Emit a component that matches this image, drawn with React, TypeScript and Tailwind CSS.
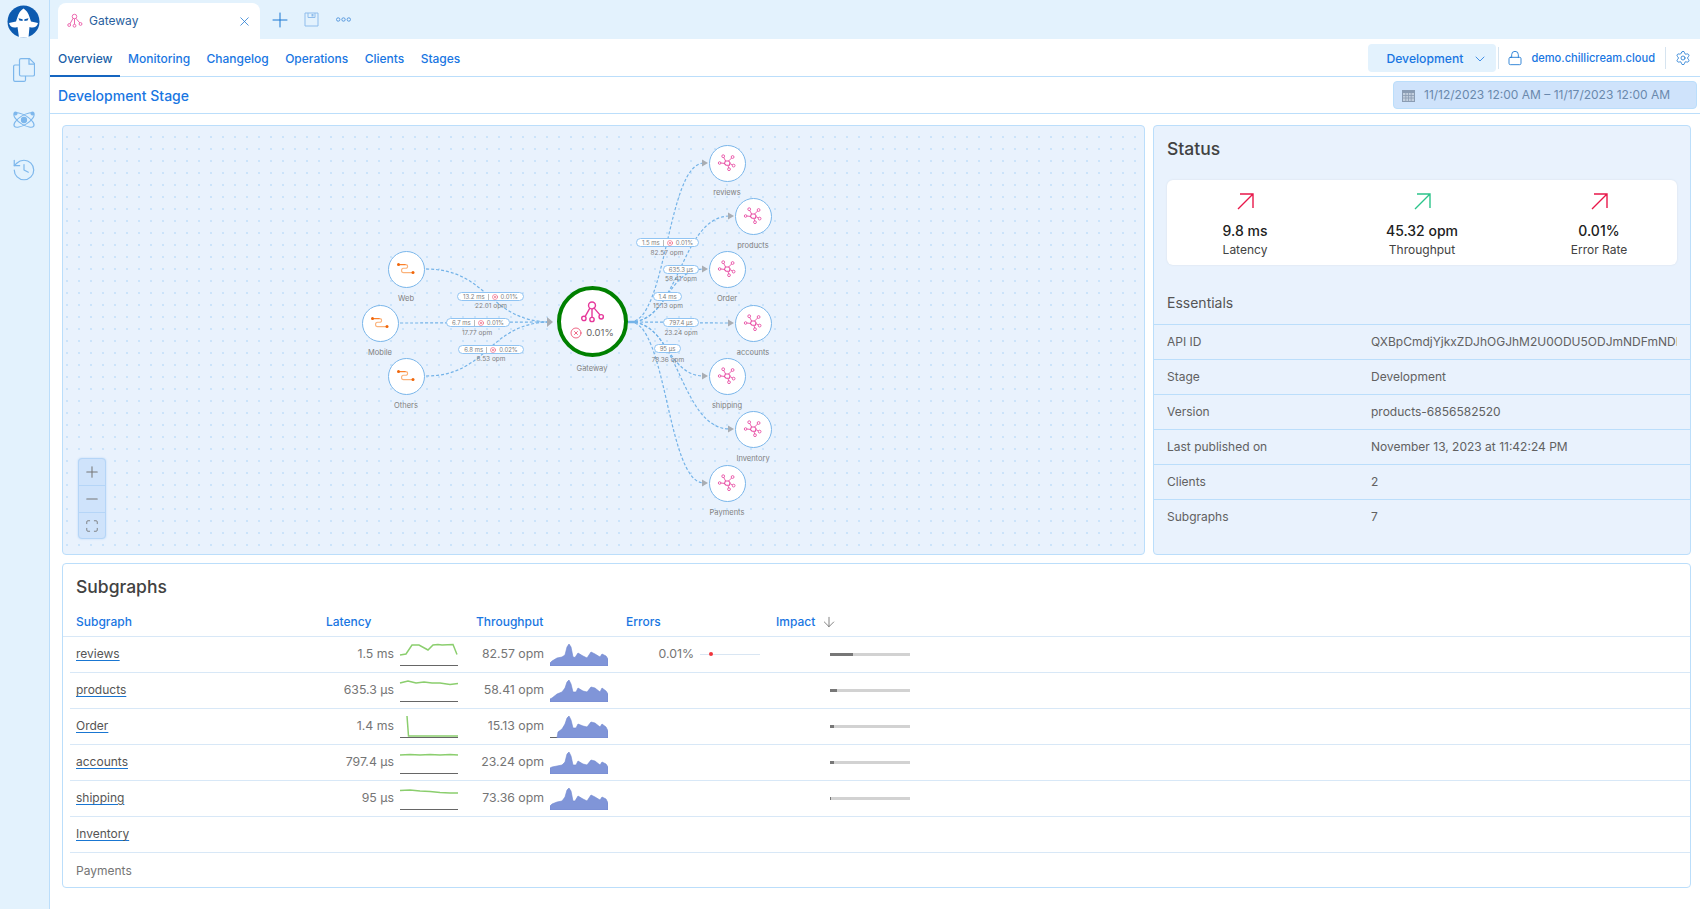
import React from "react";
import { Plus, X, ChevronDown, Lock, Settings, ArrowDown, Minus, History, Maximize, CircleX } from "lucide-react";

const OX = 63;
const OY = 126;

function GatewayIcon({ size, className }: { size: number; className?: string }) {
  return (
    <svg width={size} height={size} viewBox="0 0 24 24" fill="none" stroke="currentColor" strokeWidth="1.3" className={className}>
      <circle cx="12" cy="5" r="3.2" />
      <path d="M12 8.2v7.6M10 7.5 5.5 15.5M14 7.5l5.5 6.5" />
      <circle cx="4.5" cy="17" r="2" />
      <circle cx="12" cy="18" r="2" />
      <circle cx="20.5" cy="15.5" r="2" />
    </svg>
  );
}

function SubgraphIcon() {
  return (
    <svg width="20" height="20" viewBox="0 0 20 20" fill="none" stroke="#e84fa5" strokeWidth="0.9">
      <path d="M8.4 8h3.2l1.4 1.6-.6 2.6H9l-1.6-1.6z" strokeWidth="1.1" />
      <path d="M8.6 8 6.6 4.2M11.6 8l3-3M13 10.6l2.6 1.4M11 12.4l.6 2.6M7.4 10.4 3.8 10" />
      <circle cx="6.2" cy="3.2" r="1.4" />
      <circle cx="15.6" cy="4" r="1.4" />
      <circle cx="16.6" cy="12.6" r="1.4" />
      <circle cx="12" cy="16.2" r="1.4" />
      <circle cx="2.6" cy="10" r="1.3" />
    </svg>
  );
}

function ClientIcon() {
  return (
    <svg width="20" height="14" viewBox="0 0 20 14">
      <path d="M2.5 2.6h7c2.8 0 2.8 3.6 0 3.6H7.5c-2.6 0-2.6 4.4 0 4.4h9" fill="none" stroke="#fbb27a" strokeWidth="1.1" />
      <path d="M2.5 2.6h7" fill="none" stroke="#f97316" strokeWidth="0.9" />
      <circle cx="2.5" cy="2.6" r="1.5" fill="#f0660a" />
      <circle cx="17" cy="10.6" r="1.5" fill="#f0660a" />
    </svg>
  );
}

function Logo() {
  return (
    <svg width="33" height="33" viewBox="0 0 33 33">
      <circle cx="16.5" cy="16.5" r="16" fill="#0d5bb0" />
      <path d="M16.5 3.5 C19 5 21.5 8 22.5 12 L24 16.5 L31 18 C30 22 26.5 23.5 22.5 22 L21.5 32.5 H12 L10.5 22 C6.5 23.5 3 22 2 18 L9 16.5 L10.5 12 C11.5 8 14 5 16.5 3.5Z" fill="#fff" />
      <path d="M11.5 13.2 L15.6 14.2 V16 L12.4 15.6Z M21.5 13.2 L17.4 14.2 V16 L20.6 15.6Z" fill="#0d5bb0" />
    </svg>
  );
}

function CopyIcon() {
  return (
    <svg width="22" height="24" viewBox="0 0 22 24" fill="none" stroke="#7db7ec" strokeWidth="1.2">
      <path d="M6.5 7H2A1.5 1.5 0 0 0 .6 8.5V22A1.5 1.5 0 0 0 2 23.4h9a1.5 1.5 0 0 0 1.5-1.4v-4" />
      <path d="M8 .6h8.5l5 5V16.5A1.5 1.5 0 0 1 20 18H8a1.5 1.5 0 0 1-1.5-1.5V2A1.5 1.5 0 0 1 8 .6z" />
      <path d="M16 .6v5.5h5.5" />
    </svg>
  );
}

function AtomIcon() {
  return (
    <svg width="24" height="24" viewBox="0 0 24 24" fill="none" stroke="#7db7ec" strokeWidth="1.1">
      <ellipse cx="12" cy="12" rx="11.5" ry="4.6" transform="rotate(-32 12 12)" />
      <ellipse cx="12" cy="12" rx="11.5" ry="4.6" transform="rotate(32 12 12)" />
      <circle cx="12" cy="12" r="2.6" fill="#7db7ec" />
      <circle cx="3.5" cy="5.5" r="1.5" fill="#7db7ec" />
      <circle cx="20.5" cy="5.5" r="1.5" fill="#7db7ec" />
    </svg>
  );
}

function SaveIcon() {
  return (
    <svg width="15" height="15" viewBox="0 0 15 15" fill="none" stroke="#8fbdec" strokeWidth="1">
      <path d="M1 1h13v13H1z" />
      <path d="M4 1v4.5h7V1" />
      <rect x="7.5" y="2" width="2" height="2.5" fill="#8fbdec" stroke="none" />
    </svg>
  );
}

function TreeDots() {
  return (
    <svg width="15" height="7" viewBox="0 0 15 7" fill="none" stroke="#5a9bdf" strokeWidth="1">
      <circle cx="2.2" cy="3.5" r="1.7" />
      <circle cx="7.5" cy="3.5" r="1.7" />
      <circle cx="12.8" cy="3.5" r="1.7" />
    </svg>
  );
}

function CalendarIcon() {
  return (
    <svg width="13" height="13" viewBox="0 0 13 13">
      <rect x="0" y="1" width="13" height="12" fill="#8a9cb3" />
      <rect x="1" y="4" width="11" height="8" fill="#c3cfdd" />
      <path d="M1 6.5h11M1 9h11M3.8 4v8M6.5 4v8M9.2 4v8" stroke="#8a9cb3" strokeWidth="0.8" />
    </svg>
  );
}

function UpRight({ color }: { color: string }) {
  return (
    <svg width="17" height="17" viewBox="0 0 17 17" fill="none" stroke={color} strokeWidth="1.4">
      <path d="M1 16 16 1M3 1h13v14" />
    </svg>
  );
}

const sources = [
  { name: "Web", x: 406, y: 269 },
  { name: "Mobile", x: 380, y: 323 },
  { name: "Others", x: 406, y: 376 },
];

const targets = [
  { name: "reviews", x: 727, y: 163 },
  { name: "products", x: 753, y: 216 },
  { name: "Order", x: 727, y: 269 },
  { name: "accounts", x: 753, y: 323 },
  { name: "shipping", x: 727, y: 376 },
  { name: "Inventory", x: 753, y: 429 },
  { name: "Payments", x: 727, y: 483 },
];

const pills = [
  { l: 457, t: 292, w: 67, a: "13.2 ms", b: "0.01%", opm: "22.01 opm", cx: 491, cy: 306 },
  { l: 446, t: 318, w: 64, a: "6.7 ms", b: "0.01%", opm: "17.77 opm", cx: 477, cy: 333 },
  { l: 458, t: 345, w: 66, a: "6.8 ms", b: "0.02%", opm: "8.53 opm", cx: 491, cy: 359 },
  { l: 636, t: 238, w: 63, a: "1.5 ms", b: "0.01%", opm: "82.57 opm", cx: 667, cy: 253 },
  { l: 663, t: 265, w: 36, a: "635.3 µs", opm: "58.41 opm", cx: 681, cy: 279 },
  { l: 653, t: 292, w: 29, a: "1.4 ms", opm: "15.13 opm", cx: 668, cy: 306 },
  { l: 663, t: 318, w: 36, a: "797.4 µs", opm: "23.24 opm", cx: 681, cy: 333 },
  { l: 654, t: 344, w: 27, a: "95 µs", opm: "78.36 opm", cx: 668, cy: 360 },
];

function Edges() {
  const dash = { fill: "none", stroke: "#74b3e8", strokeWidth: 1.2, strokeDasharray: "3 2" };
  return (
    <svg className="absolute inset-0" width="1081" height="428" viewBox={`${OX} ${OY} 1081 428`}>
      {sources.map((s) => {
        const x0 = s.x + 20;
        const mx = (x0 + 551) / 2;
        return <path key={s.name} d={`M${x0} ${s.y} C${mx} ${s.y} ${mx} 322 551 322`} {...dash} />;
      })}
      <polygon points="547,317 553,322 547,327" fill="#a9adb3" />
      {targets.map((t) => {
        const x1 = t.x - 23;
        const mx = (630 + x1) / 2;
        return (
          <g key={t.name}>
            <path d={`M630 322 C${mx} 322 ${mx} ${t.y} ${x1} ${t.y}`} {...dash} />
            <polygon points={`${x1 - 2},${t.y - 3.5} ${x1 + 4},${t.y} ${x1 - 2},${t.y + 3.5}`} fill="#a9adb3" />
          </g>
        );
      })}
      <path d="M628 322h8" stroke="#74b3e8" strokeWidth="2.5" />
    </svg>
  );
}

function NodeCircle({ n, kind }: { n: { name: string; x: number; y: number }; kind: "client" | "subgraph" }) {
  return (
    <div className="absolute flex flex-col items-center w-[60px]" style={{ left: n.x - OX - 30, top: n.y - OY - 18.5 }}>
      <div className="w-[37px] h-[37px] rounded-full bg-white border-[1.5px] border-[#7ab6ea] flex items-center justify-center shrink-0">
        {kind === "client" ? <ClientIcon /> : <SubgraphIcon />}
      </div>
      <div className="text-[7.5px] leading-[10px] mt-[6px] text-[#808080]">{n.name}</div>
    </div>
  );
}

function Pill({ p }: { p: (typeof pills)[number] }) {
  return (
    <>
      <div
        className="absolute h-[9px] rounded-full bg-white border border-[#90c4f3] flex items-center justify-center text-[6px] leading-none text-[#808080] gap-[3px] whitespace-nowrap"
        style={{ left: p.l - OX, top: p.t - OY, width: p.w }}
      >
        <span>{p.a}</span>
        {p.b && (
          <>
            <span className="w-px h-[6px] bg-[#bbb]" />
            <CircleX size={6} color="#e8365d" strokeWidth={2} />
            <span>{p.b}</span>
          </>
        )}
      </div>
      <div
        className="absolute w-[50px] text-center text-[6.5px] leading-[8px] text-[#808080] whitespace-nowrap"
        style={{ left: p.cx - OX - 25, top: p.cy - OY - 4 }}
      >
        {p.opm}
      </div>
    </>
  );
}

function FlowPanel() {
  return (
    <div className="w-[1083px] shrink-0 rounded-[4px] border border-[#bbdefb] bg-[#e9f2fd] overflow-hidden">
      <div className="relative h-full w-full bg-[radial-gradient(#a8d2f7_0.6px,transparent_0.8px)] bg-[length:12px_12px] bg-[position:-2px_5px]">
        <Edges />
        {sources.map((n) => (
          <NodeCircle key={n.name} n={n} kind="client" />
        ))}
        {targets.map((n) => (
          <NodeCircle key={n.name} n={n} kind="subgraph" />
        ))}
        {pills.map((p) => (
          <Pill key={p.opm} p={p} />
        ))}
        <div className="absolute left-[493px] top-[160px] flex flex-col items-center w-[72px]">
          <div className="w-[71px] h-[71px] rounded-full bg-white border-[4px] border-[#008000] flex flex-col items-center justify-center shrink-0">
            <GatewayIcon size={26} className="text-[#e6399b] mt-[-3px]" />
            <div className="flex items-center gap-[4px] text-[9.5px] leading-[14px] text-[#666]">
              <CircleX size={12} color="#e8365d" strokeWidth={1.5} />
              <span>0.01%</span>
            </div>
          </div>
          <div className="text-[7.5px] leading-[10px] mt-[7px] text-[#808080]">Gateway</div>
        </div>
        <div className="absolute left-[15px] top-[332px] w-[28px] rounded-[4px] bg-[#cfe3fb] border border-[#b5d5f7] shadow-[0_0_2px_#b5d5f7] divide-y divide-[#b5d5f7] text-[#777]">
          <div className="h-[27px] flex items-center justify-center">
            <Plus size={18} strokeWidth={1.4} />
          </div>
          <div className="h-[27px] flex items-center justify-center">
            <Minus size={18} strokeWidth={1.4} />
          </div>
          <div className="h-[25px] flex items-center justify-center">
            <Maximize size={14} strokeWidth={1.5} />
          </div>
        </div>
      </div>
    </div>
  );
}

const essentials = [
  ["API ID", "QXBpCmdjYjkxZDJhOGJhM2U0ODU5ODJmNDFmNDI"],
  ["Stage", "Development"],
  ["Version", "products-6856582520"],
  ["Last published on", "November 13, 2023 at 11:42:24 PM"],
  ["Clients", "2"],
  ["Subgraphs", "7"],
];

const stats = [
  { v: "9.8 ms", l: "Latency", c: "#e8174a" },
  { v: "45.32 opm", l: "Throughput", c: "#2bc48a" },
  { v: "0.01%", l: "Error Rate", c: "#e8174a" },
];

function StatusPanel() {
  return (
    <div className="flex-1 rounded-[4px] border border-[#bbdefb] bg-[#e9f2fd] overflow-hidden">
      <div className="px-[13px] pt-[11px] text-[17.5px] leading-[24px] font-medium text-[#424242]">Status</div>
      <div className="mx-[13px] mt-[19px] h-[85px] rounded-[6px] bg-white shadow-[0_0_2px_#d5dde8] flex justify-center">
        {stats.map((s) => (
          <div key={s.l} className="w-[177px] shrink-0 flex flex-col items-center pt-[13px]">
            <UpRight color={s.c} />
            <div className="mt-[11px] text-[14px] leading-[20px] font-medium text-[#212121]">{s.v}</div>
            <div className="text-[12px] leading-[18px] text-[#424242]">{s.l}</div>
          </div>
        ))}
      </div>
      <div className="px-[13px] mt-[6px] h-[52px] flex items-center pt-[10px] text-[14px] text-[#555]">Essentials</div>
      <div className="mt-[1px]">
        {essentials.map(([k, v]) => (
          <div key={k} className="h-[35px] border-t border-[#bbdefb] px-[13px] flex items-center text-[12px] text-[#616161]">
            <div className="w-[204px] shrink-0">{k}</div>
            <div className="flex-1 overflow-hidden whitespace-nowrap">{v}</div>
          </div>
        ))}
      </div>
    </div>
  );
}

const LAT: Record<string, string> = {
  reviews: "0,11 6,10 12,1 19,1 28,6 33,1 38,0.5 42,1 53,0.5 57,10.5",
  products: "0,3 8,1 16,3 24,2 32,3 40,3 50,4.5 58,3.5",
  Order: "7,0 8.5,20 58,20",
  accounts: "0,3 10,2.5 20,3 30,2.5 40,3 50,2.5 58,3",
  shipping: "0,2.5 10,2 20,3 30,3.5 40,4.5 50,5 58,5",
};

const TP: Record<string, string> = {
  reviews: "0,19 2,17 7,14 12,13 15,11 17,3 19,0 21,3 23,13 25,13.5 28,9 33,12 37,14 41,8 45,10 50,13 52,10 56,12 58,15",
  products: "0,19 2,18 7,14 12,12 15,8 17,2 19,0 21,4 23,12 26,12 28,8 33,11 37,12 41,7 45,8 50,12 52,8 56,11 58,14",
  Order: "7,22 8,16 12,13 15,8 17,2 19,0 21,4 23,12 26,12 28,8 33,10 37,11 41,6 45,7 50,11 52,8 56,11 58,15",
  accounts: "0,16 2,15 7,14 12,13 15,10 17,2 19,0 21,4 23,13 26,13 28,9 33,12 37,13 41,8 45,9 50,13 52,10 56,12 58,15",
  shipping: "0,18 2,16 7,14 12,13 15,9 17,2 19,0 21,3 23,13 25,13 28,8 33,11 37,13 41,7 45,9 50,12 52,9 56,11 58,15",
};

function Spark({ pts }: { pts: string }) {
  return (
    <div className="w-[58px] h-[22px] border-b border-[#666]">
      <svg width="58" height="21" viewBox="0 0 58 21" className="overflow-visible">
        <polyline points={pts} fill="none" stroke="#8bce6e" strokeWidth="1.5" />
      </svg>
    </div>
  );
}

function Area({ pts }: { pts: string }) {
  const first = pts.split(" ")[0].split(",")[0];
  return (
    <div className="w-[58px] h-[22px] border-b border-[#666]">
      <svg width="58" height="22" viewBox="0 0 58 22">
        <polygon points={`${first},22 ${pts} 58,22`} fill="#8095d8" stroke="#6f86d0" strokeWidth="0.6" />
      </svg>
    </div>
  );
}

const rows = [
  { n: "reviews", lat: "1.5 ms", tp: "82.57 opm", err: "0.01%", imp: 23 },
  { n: "products", lat: "635.3 µs", tp: "58.41 opm", imp: 7 },
  { n: "Order", lat: "1.4 ms", tp: "15.13 opm", imp: 4 },
  { n: "accounts", lat: "797.4 µs", tp: "23.24 opm", imp: 4 },
  { n: "shipping", lat: "95 µs", tp: "73.36 opm", imp: 1 },
  { n: "Inventory" },
  { n: "Payments", plain: true },
] as { n: string; lat?: string; tp?: string; err?: string; imp?: number; plain?: boolean }[];

function SubgraphsTable() {
  return (
    <div className="h-[325px] rounded-[4px] border border-[#bbdefb] bg-white overflow-hidden">
      <div className="pl-[13px] pt-[11px] h-[45px] text-[17.5px] leading-[24px] font-medium text-[#424242]">Subgraphs</div>
      <div className="h-[27px] pl-[13px] pb-[3px] mt-[1px] border-b border-[#d8e8f7] flex items-center text-[12px] text-[#1976e2] font-medium">
        <div className="w-[250px]">Subgraph</div>
        <div className="w-[150px]">Latency</div>
        <div className="w-[150px]">Throughput</div>
        <div className="w-[150px]">Errors</div>
        <div className="flex items-center">
          Impact
          <ArrowDown size={16} strokeWidth={1.2} color="#666" className="ml-[6px]" />
        </div>
      </div>
      {rows.map((r, i) => (
        <div key={r.n} className={`h-[36px] ml-[7px] pl-[6px] pb-[1px] flex items-center text-[12.3px] text-[#757575] ${i < rows.length - 1 ? "border-b border-[#d8e8f7]" : ""}`}>
          <div className="w-[250px] shrink-0 text-[12px]">
            {r.plain ? (
              <span>{r.n}</span>
            ) : (
              <span className="text-[#555] underline decoration-[#1976d2] underline-offset-2">{r.n}</span>
            )}
          </div>
          {r.lat && (
            <>
              <div className="w-[150px] shrink-0 flex items-center">
                <div className="w-[68px] text-right whitespace-nowrap">{r.lat}</div>
                <div className="ml-[6px] mt-[2px]">
                  <Spark pts={LAT[r.n]} />
                </div>
              </div>
              <div className="w-[150px] shrink-0 flex items-center">
                <div className="w-[68px] text-right whitespace-nowrap">{r.tp}</div>
                <div className="ml-[6px] mt-[2px]">
                  <Area pts={TP[r.n]} />
                </div>
              </div>
              <div className="w-[150px] shrink-0 flex items-center">
                {r.err && (
                  <>
                    <div className="w-[68px] text-right">{r.err}</div>
                    <div className="ml-[6px] relative w-[60px] h-px bg-[#d9e6f3]">
                      <div className="absolute left-[9px] top-[-2px] w-[4px] h-[4px] rounded-full bg-[#f0343c]" />
                    </div>
                  </>
                )}
              </div>
              <div className="ml-[54px] w-[80px] h-[3px] bg-[#d2d2d2]">
                <div className="h-full bg-[#777]" style={{ width: r.imp }} />
              </div>
            </>
          )}
        </div>
      ))}
    </div>
  );
}

const navItems = ["Monitoring", "Changelog", "Operations", "Clients", "Stages"];

export default function App() {
  return (
    <div className="flex h-[909px] w-[1700px] overflow-hidden bg-white font-['Inter','Liberation_Sans',sans-serif]">
      <aside className="w-[50px] shrink-0 bg-[#e3f2fd] border-r border-[#bbdefb] flex flex-col items-center">
        <div className="mt-[5px] ml-[-2px]">
          <Logo />
        </div>
        <div className="mt-[20px] ml-[-2px]">
          <CopyIcon />
        </div>
        <div className="mt-[26px] ml-[-2px]">
          <AtomIcon />
        </div>
        <History size={26} strokeWidth={1.1} color="#7db7ec" className="mt-[25px] ml-[-2px]" />
      </aside>
      <main className="flex-1 min-w-0 flex flex-col">
        <div className="h-[39px] bg-[#e3f2fd] flex items-end pl-[8px]">
          <div className="w-[202px] h-[36px] bg-white rounded-t-[8px] flex items-center pl-[8px] pr-[8px] text-[12px] text-[#2a5f9e]">
            <GatewayIcon size={17} className="text-[#ea5ca8]" />
            <span className="ml-[6px] flex-1">Gateway</span>
            <X size={15} strokeWidth={1.2} color="#1976d2" />
          </div>
          <div className="h-[39px] flex items-center ml-[8px]">
            <Plus size={24} strokeWidth={1} color="#1976d2" />
            <div className="ml-[12px] flex">
              <SaveIcon />
            </div>
            <div className="ml-[17px] flex">
              <TreeDots />
            </div>
          </div>
        </div>
        <div className="h-[38px] border-b border-[#bbdefb] flex items-stretch text-[12px] font-medium">
          <div className="px-[8px] pt-[3px] w-[70px] flex items-center border-b-2 border-[#1565c0] mb-[-1px] text-[#1a5fa8]">Overview</div>
          <div className="flex items-center pt-[3px] gap-[16.4px] ml-[8px] text-[#1976e2]">
            {navItems.map((n) => (
              <span key={n}>{n}</span>
            ))}
          </div>
          <div className="ml-auto flex items-center pr-[9px] pt-[1px]">
            <div className="w-[128px] h-[28px] rounded-[4px] bg-[#e3f2fd] flex items-center pl-[18px] pt-[2px] text-[12.2px] font-medium text-[#1976e2]">
              Development
              <ChevronDown size={16} strokeWidth={1.2} className="ml-[9px]" />
            </div>
            <div className="w-px h-[22px] bg-[#d6e4f0] ml-[2px]" />
            <Lock size={16} strokeWidth={1.3} color="#1976d2" className="ml-[8px]" />
            <span className="ml-[8px] pt-[1px] text-[11.1px] font-medium text-[#1976e2]">demo.chillicream.cloud</span>
            <div className="w-px h-[22px] bg-[#d6e4f0] ml-[10px]" />
            <Settings size={16} strokeWidth={1.2} color="#1976d2" className="ml-[9px]" />
          </div>
        </div>
        <div className="h-[37px] border-b border-[#bbdefb] flex items-center pl-[8px] pr-[3px]">
          <span className="text-[14px] font-medium text-[#1976e2]">Development Stage</span>
          <div className="ml-auto w-[304px] h-[28px] rounded-[4px] bg-[#cfe3fb] border border-[#bbdefb] flex items-center pl-[8px] text-[12px] text-[#6a89ad]">
            <CalendarIcon />
            <span className="ml-[9px] whitespace-nowrap">11/12/2023 12:00 AM – 11/17/2023 12:00 AM</span>
          </div>
        </div>
        <div className="flex-1 min-h-0 pl-[12px] pr-[9px] pt-[11px] flex flex-col gap-[8px]">
          <div className="h-[430px] flex gap-[8px]">
            <FlowPanel />
            <StatusPanel />
          </div>
          <SubgraphsTable />
        </div>
      </main>
    </div>
  );
}
